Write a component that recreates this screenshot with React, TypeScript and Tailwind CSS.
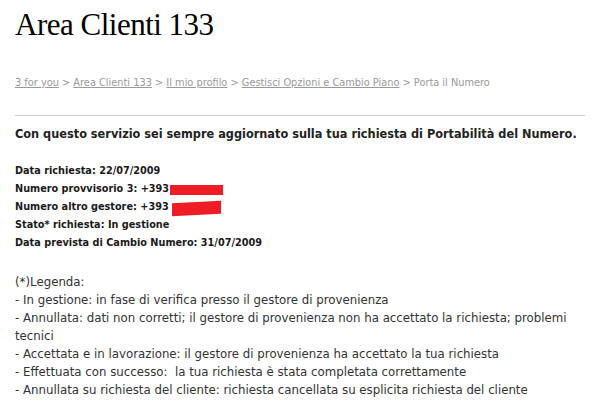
import React from "react";

const Redact = ({ w, h, cls }: { w: string; h: string; cls: string }) => (
  <span className={`inline-block bg-[#ee1c25] ${w} ${h} ${cls}`} />
);

export default function App() {
  const body = "font-['DejaVu_Sans_Condensed','DejaVu_Sans',sans-serif]";
  return (
    <div className="w-[598px] h-[402px] bg-white overflow-hidden pl-[15px] pr-[13px]">
      <h1 className="font-['Liberation_Serif',serif] text-[31px] leading-[31px] text-black pt-[9px] tracking-[-0.5px]">
        Area Clienti 133
      </h1>
      <div className={`${body} text-[10.9px] text-[#999] mt-[35px] leading-[16px]`}>
        <span className="underline">3 for you</span> &gt; <span className="underline">Area Clienti 133</span> &gt;{" "}
        <span className="underline">Il mio profilo</span> &gt;{" "}
        <span className="underline">Gestisci Opzioni e Cambio Piano</span> &gt; Porta il Numero
      </div>
      <div className="mt-[24px] border-t border-[#cfcfcf]" />
      <div className={`${body} text-[#222] leading-[18px]`}>
        <p className="font-bold mt-[9px] text-[12.6px]">
          Con questo servizio sei sempre aggiornato sulla tua richiesta di Portabilità del Numero.
        </p>
        <div className="mt-[19px] font-bold text-[10.8px] text-[#1a1a1a]">
          <div>Data richiesta: 22/07/2009</div>
          <div className="flex items-center">
            Numero provvisorio 3: +393
            <Redact w="w-[53px]" h="h-[10px]" cls="ml-[1px] mt-[1px]" />
          </div>
          <div className="flex items-center">
            Numero altro gestore: +393
            <Redact w="w-[49px]" h="h-[13px]" cls="ml-[3px] mt-[2px] -skew-y-3" />
          </div>
          <div>Stato* richiesta: In gestione</div>
          <div>Data prevista di Cambio Numero: 31/07/2009</div>
        </div>
        <div className="mt-[21px] font-normal text-[13.1px] text-[#333]">
          <div>(*)Legenda:</div>
          <div>- In gestione: in fase di verifica presso il gestore di provenienza</div>
          <div>
            - Annullata: dati non corretti; il gestore di provenienza non ha accettato la richiesta; problemi
            <br />
            tecnici
          </div>
          <div>- Accettata e in lavorazione: il gestore di provenienza ha accettato la tua richiesta</div>
          <div>- Effettuata con successo:&nbsp; la tua richiesta è stata completata correttamente</div>
          <div>- Annullata su richiesta del cliente: richiesta cancellata su esplicita richiesta del cliente</div>
        </div>
      </div>
    </div>
  );
}
